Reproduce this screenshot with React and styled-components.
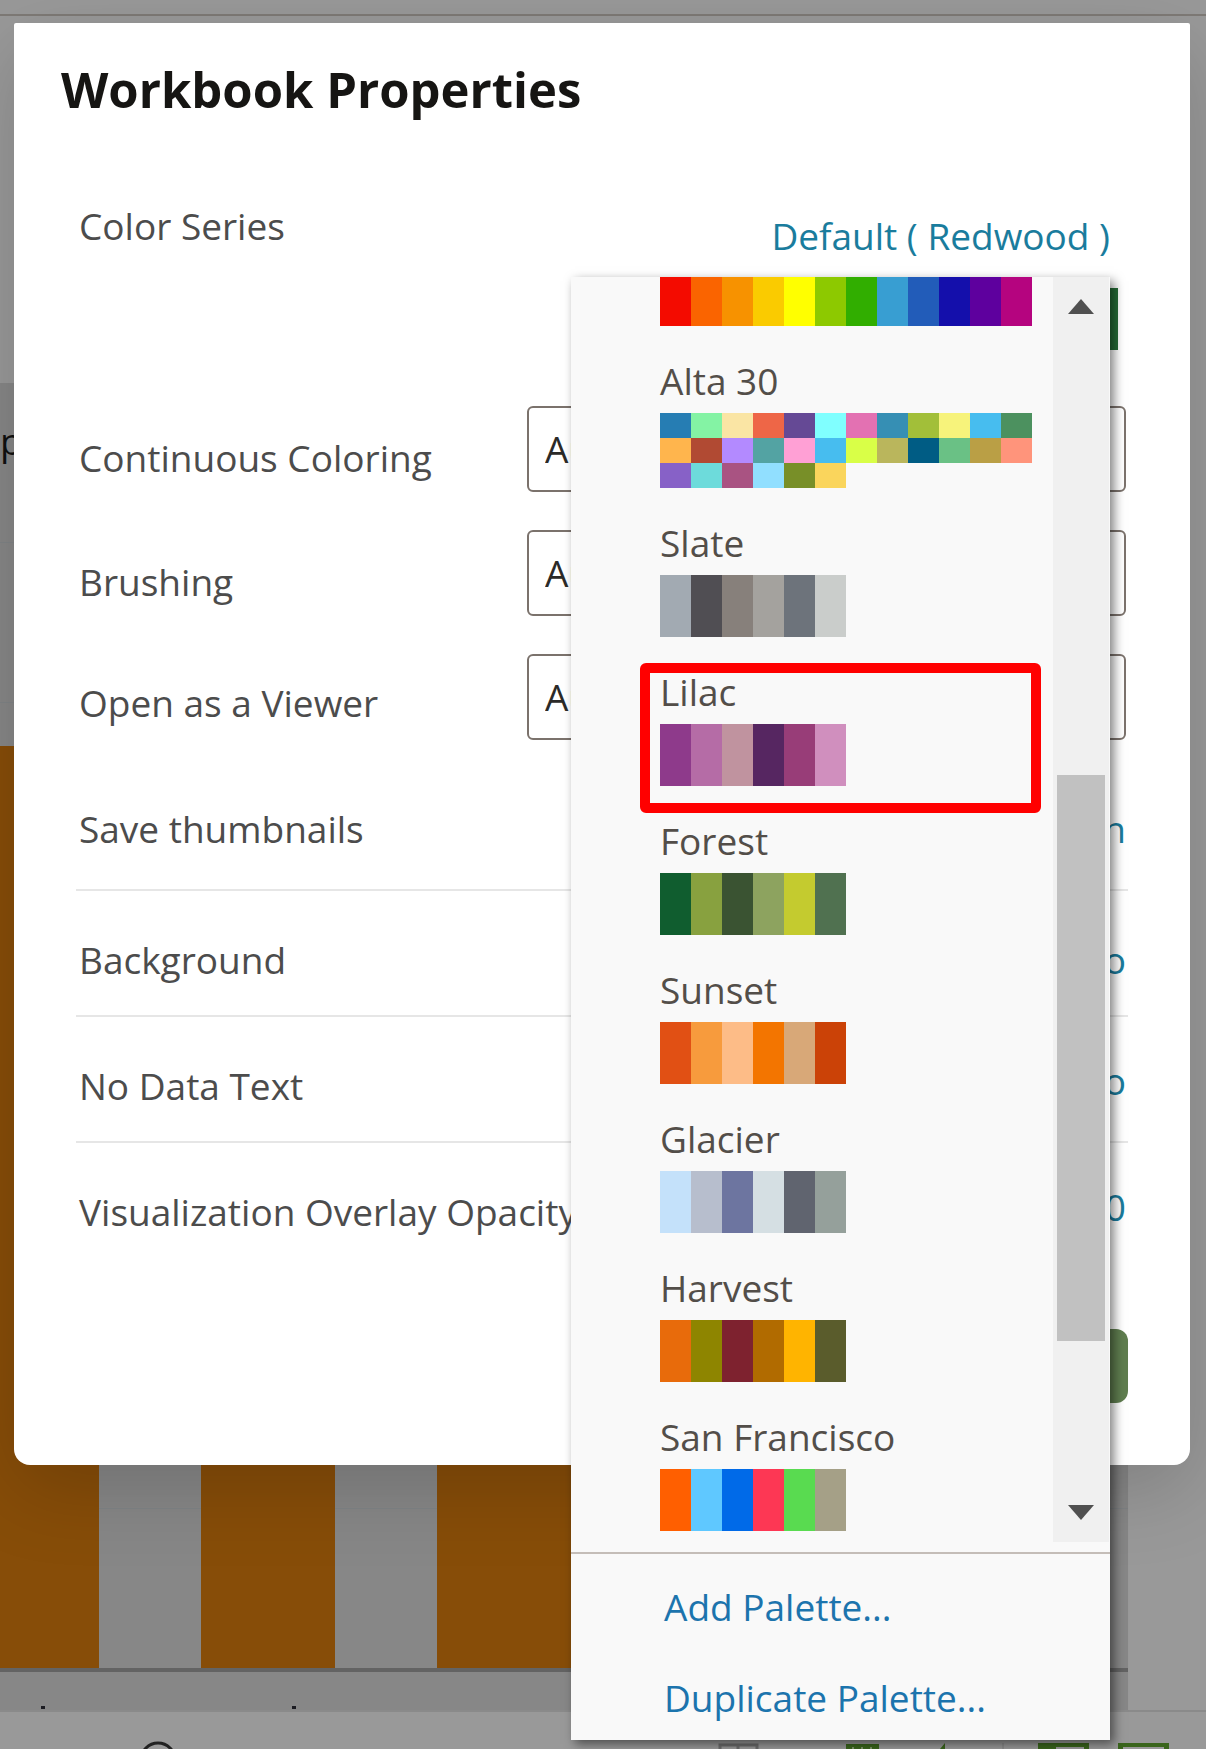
import React from "react";
import styled, { createGlobalStyle } from "styled-components";

const Global = createGlobalStyle`
  *, *::before, *::after { box-sizing: border-box; }
  body { margin: 0; background: #999; font-family: "Open Sans", "Noto Sans", sans-serif; font-weight: 400; }
`;

const Page = styled.div`
  position: relative;
  min-height: 100vh;
  display: flex;
  flex-direction: column;
  overflow: hidden;
`;

/* ---------- dimmed workbook ---------- */
const TopBar = styled.div`
  height: 16px;
  background: #999;
  border-bottom: 2px solid #7e7a76;
`;
const HeaderBand = styled.div`
  height: 367px;
`;
const Canvas = styled.div`
  flex: 1;
  display: flex;
  border-bottom: 2px solid #8a8a8a;
`;
const Chart = styled.div`
  flex: 1;
  display: flex;
  flex-direction: column;
  background: #878787;
`;
const ChartTitle = styled.div`
  height: 160px;
  padding-top: 34px;
  border-bottom: 1px solid #808486;
  font-size: 37px;
  line-height: 48px;
  color: #111;
`;
const PlotArea = styled.div`
  flex: 1;
  display: flex;
  align-items: flex-end;
  gap: 102px;
  border-bottom: 4px solid #636363;
  background: linear-gradient(#808486, #808486) 0 159px / 100% 1px no-repeat,
    linear-gradient(#808486, #808486) 0 calc(100% - 159px) / 100% 1px no-repeat;
`;
const Bar = styled.div`
  width: ${(p) => p.$w}px;
  height: calc(100% - 203px);
  background: #874d08;
`;
const AxisLabels = styled.div`
  height: 38px;
  display: flex;
  align-items: flex-end;
  gap: 247px;
  padding: 0 0 1px 41px;
`;
const Tick = styled.span`
  width: 4px;
  height: 3px;
  background: #1c1c22;
`;
const SideRail = styled.div`
  width: 78px;
`;
const Footer = styled.div`
  height: 37px;
  display: flex;
  justify-content: space-between;
  align-items: flex-end;
  padding: 0 37px 0 140px;
  svg { display: block; }
`;

/* ---------- dialog ---------- */
const Overlay = styled.div`
  position: absolute;
  inset: 0;
  padding: 23px 16px 0 14px;
`;
const Dialog = styled.section`
  position: relative;
  padding: 32px 62px 62px;
  background: #fff;
  border-radius: 2px 2px 16px 16px;
  box-shadow: 0 24px 80px rgba(0, 0, 0, 0.17);
`;
const Title = styled.h1`
  margin: 0 0 0 -15px;
  font-size: 49px;
  line-height: 68px;
  font-weight: 700;
  color: #161513;
`;
const Rows = styled.div`
  padding-top: 46px;
`;
const Row = styled.div`
  display: flex;
  justify-content: space-between;
  align-items: flex-start;
  height: ${(p) => p.$h}px;
  padding: ${(p) => p.$top || 0}px 2px 0 3px;
  border-bottom: ${(p) => (p.$line ? "2px solid #e6e6e6" : "0")};
`;
const Label = styled.label`
  font-size: 37px;
  line-height: 48px;
  color: #4c4c4c;
  white-space: nowrap;
  padding-top: ${(p) => p.$drop || 0}px;
`;
const SeriesValue = styled.div`
  display: flex;
  flex-direction: column;
  align-items: flex-end;
  gap: 28px;
  padding: 10px 8px 0 0;
`;
const ValueLink = styled.a`
  padding-right: ${(p) => p.$inset || 0}px;
  font-size: 37px;
  line-height: 48px;
  color: #1a7c9d;
  text-decoration: none;
  white-space: nowrap;
`;
const SeriesBar = styled.div`
  width: 372px;
  height: 62px;
  background: #256b36;
`;
const Select = styled.select`
  appearance: none;
  width: 599px;
  height: 86px;
  padding: 0 16px 2px;
  border: 2px solid #7b726c;
  border-radius: 6px;
  background: #fff;
  font: inherit;
  font-size: 37px;
  color: #2b2a28;
`;
const Actions = styled.div`
  display: flex;
  justify-content: flex-end;
`;
const SaveButton = styled.button`
  width: 140px;
  height: 74px;
  border: 0;
  border-radius: 12px;
  background: #5f7d4f;
`;

/* ---------- palette menu ---------- */
const Menu = styled.div`
  position: absolute;
  top: 254px;
  right: 80px;
  width: 539px;
  background: #f9f9f9;
  box-shadow: 4px 4px 10px rgba(0, 0, 0, 0.5);
`;
const Scroller = styled.div`
  display: flex;
  justify-content: space-between;
  padding-right: 1px;
  margin-bottom: 10px;
`;
const PaletteList = styled.div`
  display: flex;
  flex-direction: column;
  gap: 31px;
  padding-left: 89px;
`;
const Palette = styled.button`
  position: relative;
  display: block;
  width: 372px;
  padding: 0;
  border: 0;
  background: none;
  text-align: left;
  font: inherit;
`;
const PaletteName = styled.span`
  display: block;
  margin-bottom: 8px;
  font-size: 37px;
  line-height: 48px;
  color: #534e49;
`;
const Swatches = styled.span`
  display: grid;
  grid-template-columns: repeat(12, 31px);
  grid-auto-rows: ${(p) => p.$h}px;
`;
const Swatch = styled.span`
  background: ${(p) => p.$c};
`;
const Highlight = styled.span`
  position: absolute;
  inset: -5px -9px -27px -20px;
  border: 10px solid #f00;
  border-radius: 6px;
`;
const ScrollBar = styled.div`
  width: 56px;
  height: 1265px;
  display: flex;
  flex-direction: column;
  align-items: center;
  background: #f0f0f0;
  svg { display: block; }
`;
const Thumb = styled.div`
  width: 48px;
  height: 566px;
  margin: 461px 0 164px;
  background: #c1c1c1;
`;
const MenuActions = styled.div`
  display: flex;
  flex-direction: column;
  align-items: flex-start;
  gap: 43px;
  padding: 29px 0 18px 93px;
  border-top: 2px solid #c4bdb8;
`;
const MenuLink = styled.a`
  font-size: 37px;
  line-height: 48px;
  color: #1c74ad;
  text-decoration: none;
`;

const palettes = [
  { h: 49, colors: "#f40b00 #fa6400 #f79200 #facb00 #ffff00 #8dc900 #31ae00 #389ed2 #225cb9 #140fab #5e009e #b5047f" },
  {
    name: "Alta 30",
    h: 25,
    colors:
      "#267db3 #84f3a4 #fae5a4 #ee6647 #654995 #80ffff #e371b2 #368fb4 #a2bf39 #f7f37b #47bdef #4c915f " +
      "#ffb54d #b14a33 #b38aff #53a3a3 #ffa0d5 #47bdef #d9ff47 #bab65c #005c84 #6ac185 #ba9f45 #ff947b " +
      "#8761c7 #6ddbdb #a95382 #91dfff #788f28 #fad55c",
  },
  { name: "Slate", h: 62, colors: "#a2aab2 #504e53 #87807b #a4a29e #6d737b #cacdcb" },
  { name: "Lilac", h: 62, selected: true, colors: "#8e3a8b #b56ca6 #c0939f #562661 #983d78 #d08fbe" },
  { name: "Forest", h: 62, colors: "#105d2f #88a13f #3a5332 #8da35f #c4cb2f #507150" },
  { name: "Sunset", h: 62, colors: "#e15014 #f79b3d #fdbc87 #f37500 #d8a878 #cb4207" },
  { name: "Glacier", h: 62, colors: "#c4e1fa #b7becd #6d75a0 #d5dfe3 #60646f #95a09b" },
  { name: "Harvest", h: 62, colors: "#e86b0b #8e8500 #7e222f #b16b00 #ffb400 #5a5c2c" },
  { name: "San Francisco", h: 62, colors: "#ff5f00 #5fc8ff #006ae8 #fd3754 #59db50 #a5a087" },
];

const Arrow = ({ down }) => (
  <svg width="26" height="37" viewBox="0 0 26 37" aria-hidden="true">
    <path d={down ? "M0 0H26L13 15Z" : "M0 37H26L13 22Z"} fill="#505050" />
  </svg>
);

export default function App() {
  return (
    <Page>
      <Global />
      <TopBar />
      <HeaderBand />
      <Canvas>
        <Chart>
          <ChartTitle>p</ChartTitle>
          <PlotArea>
            <Bar $w={99} />
            <Bar $w={134} />
            <Bar $w={134} />
          </PlotArea>
          <AxisLabels>
            <Tick />
            <Tick />
          </AxisLabels>
        </Chart>
        <SideRail />
      </Canvas>
      <Footer>
        <svg width="36" height="8" aria-hidden="true">
          <circle cx="18" cy="19" r="17" fill="none" stroke="#222" strokeWidth="3" />
        </svg>
        <svg width="451" height="6" aria-hidden="true">
          <path d="M2 6V2H39V6M20 2V6" fill="none" stroke="#6c6c6c" strokeWidth="3" />
          <path d="M128 1H161V6H128Z" fill="#3a651c" />
          <path d="M135 4V6M144 4V6M153 4V6" stroke="#7d9468" strokeWidth="2" />
          <path d="M222 6L227 0V6Z" fill="#3a651c" />
          <path d="M285 0V6" stroke="#808080" strokeWidth="1" />
          <path d="M320 0H371V6H366V4H338V6H320Z" fill="#3a651c" />
          <path d="M400 0H451V6H446V4H405V6H400Z" fill="#3a651c" />
        </svg>
      </Footer>

      <Overlay>
        <Dialog aria-labelledby="dialog-title">
          <Title id="dialog-title">Workbook Properties</Title>
          <Rows>
            <Row $h={214} $top={33}>
              <Label as="span">Color Series</Label>
              <SeriesValue>
                <ValueLink href="#series" $inset={8}>Default ( Redwood )</ValueLink>
                <SeriesBar />
              </SeriesValue>
            </Row>
            <Row $h={124} $top={23}>
              <Label htmlFor="coloring" $drop={28}>Continuous Coloring</Label>
              <Select id="coloring"><option>Auto</option></Select>
            </Row>
            <Row $h={124} $top={23}>
              <Label htmlFor="brushing" $drop={28}>Brushing</Label>
              <Select id="brushing"><option>Auto</option></Select>
            </Row>
            <Row $h={124} $top={23}>
              <Label htmlFor="viewer" $drop={25}>Open as a Viewer</Label>
              <Select id="viewer"><option>Auto</option></Select>
            </Row>
            <Row $h={136} $top={50} $line>
              <Label as="span">Save thumbnails</Label>
              <ValueLink href="#thumbnails">On</ValueLink>
            </Row>
            <Row $h={126} $top={45} $line>
              <Label as="span">Background</Label>
              <ValueLink href="#background">Auto</ValueLink>
            </Row>
            <Row $h={126} $top={40} $line>
              <Label as="span" $drop={5}>No Data Text</Label>
              <ValueLink href="#nodata">Auto</ValueLink>
            </Row>
            <Row $h={186} $top={40}>
              <Label as="span" $drop={5}>Visualization Overlay Opacity</Label>
              <ValueLink href="#opacity">0</ValueLink>
            </Row>
          </Rows>
          <Actions>
            <SaveButton type="button" aria-label="Save" />
          </Actions>

          <Menu>
            <Scroller>
              <PaletteList>
                {palettes.map((p, i) => (
                  <Palette key={i} type="button" aria-label={p.name || "Rainbow"}>
                    {p.name && <PaletteName>{p.name}</PaletteName>}
                    <Swatches $h={p.h}>
                      {p.colors.split(" ").map((c, j) => (
                        <Swatch key={j} $c={c} />
                      ))}
                    </Swatches>
                    {p.selected && <Highlight />}
                  </Palette>
                ))}
              </PaletteList>
              <ScrollBar>
                <Arrow />
                <Thumb />
                <Arrow down />
              </ScrollBar>
            </Scroller>
            <MenuActions>
              <MenuLink href="#add">Add Palette...</MenuLink>
              <MenuLink href="#duplicate">Duplicate Palette...</MenuLink>
            </MenuActions>
          </Menu>
        </Dialog>
      </Overlay>
    </Page>
  );
}
